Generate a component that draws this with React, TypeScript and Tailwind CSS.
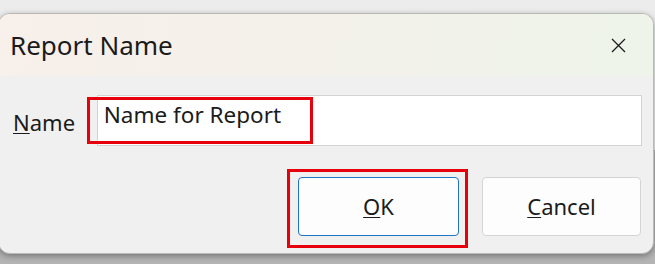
import React from 'react';

const font = { fontFamily: '"Noto Sans", "Open Sans", sans-serif' };

const App = () => {
  return (
    <div
      className="relative w-[655px] h-[264px] overflow-hidden pt-[13px] bg-[linear-gradient(to_bottom,#ececec_0px,#ececec_150px,#b4b4b4_150px,#b4b4b4_100%)]"
      style={font}
    >
      {/* Dialog */}
      <div className="ml-[-2px] w-[656px] h-[241px] rounded-[12px] border border-[#b9b9b9] bg-[#f0f0f0] overflow-hidden flex flex-col shadow-[0_2px_6px_rgba(0,0,0,0.35)]">
        {/* Title bar */}
        <div className="h-[62px] shrink-0 flex items-center justify-between pl-[11px] pr-[27px] bg-[linear-gradient(100deg,#f8f0ea_0%,#f3f1ea_50%,#eef4ea_100%)]">
          <span className="text-[26px] text-[#1b1b1b] leading-none pb-[1px]">Report Name</span>
          <svg width="15" height="15" viewBox="0 0 15 15" className="text-[#1b1b1b]">
            <path d="M1 1 L14 14 M14 1 L1 14" stroke="currentColor" strokeWidth="1.3" fill="none" />
          </svg>
        </div>

        {/* Body */}
        <div className="flex flex-col pt-[19px] pl-[14px] pr-[11px]">
          <div className="flex items-center">
            <label className="w-[84px] text-[22px] text-[#1b1b1b] leading-none pt-[3px]">
              <span className="underline underline-offset-[2px] decoration-1">N</span>ame
            </label>
            <div className="w-[547px] h-[51px] bg-white border border-[#d3d3d3] pl-[6px] pt-[5px] text-[22.5px] text-[#1b1b1b] leading-[28px]">
              Name for Report
            </div>
          </div>

          <div className="flex justify-end gap-[23px] mt-[31px] pr-[1px]">
            <button className="w-[161px] h-[59px] rounded-[4px] border border-[#1f73c9] bg-[#fdfdfd] text-[22px] text-[#1b1b1b]">
              <span className="underline underline-offset-[2px] decoration-1">O</span>K
            </button>
            <button className="w-[159px] h-[59px] rounded-[4px] border border-[#d4d4d4] bg-[#fdfdfd] text-[22px] text-[#1b1b1b]">
              <span className="underline underline-offset-[2px] decoration-1">C</span>ancel
            </button>
          </div>
        </div>
      </div>

      {/* Red annotation boxes */}
      <div className="absolute left-[87px] top-[97px] w-[226px] h-[47px] border-[3px] border-[#e5000b]" />
      <div className="absolute left-[287px] top-[169px] w-[181px] h-[79px] border-[3px] border-[#e5000b]" />
    </div>
  );
};

export default App;
